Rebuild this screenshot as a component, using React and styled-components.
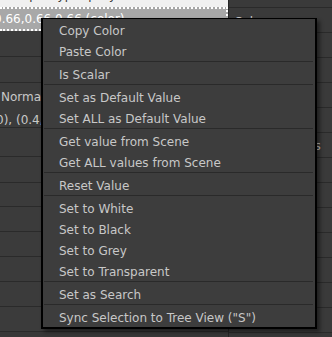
import React from 'react';
import styled, { createGlobalStyle } from 'styled-components';

const Global = createGlobalStyle`
  html, body { margin: 0; padding: 0; background: #3a3a3a; }
  body {
    font-family: "DejaVu Sans", Verdana, sans-serif;
    font-size: 12px;
    overflow: hidden;
  }
`;

const Page = styled.div`
  position: relative;
  width: 332px;
  height: 337px;
  overflow: hidden;
  display: grid;
  grid-template-columns: 228px 1px 1fr;
  background: #3a3a3a;
`;

const Column = styled.div`
  display: flex;
  flex-direction: column;
  min-width: 0;
`;

const VDivider = styled.div`
  background: #262626;
`;

const Cell = styled.div`
  flex: none;
  height: ${(p) => p.$h}px;
  box-sizing: border-box;
  border-bottom: ${(p) => (p.$noLine ? 'none' : '1px solid #2a2a2a')};
  background: ${(p) => p.$bg || '#3b3b3b'};
  display: flex;
  flex-direction: column;
  justify-content: ${(p) => (p.$top ? 'flex-start' : 'center')};
  padding-left: ${(p) => p.$pad ?? 2}px;
  padding-top: ${(p) => p.$padTop ?? 0}px;
  color: #c8c8c8;
  white-space: nowrap;
  overflow: hidden;
`;

const HeaderStrip = styled.div`
  flex: none;
  height: 7px;
  background: #f0f0f0;
  overflow: hidden;
  color: #333;
  white-space: nowrap;
`;

const HeaderText = styled.div`
  margin-top: -12px;
  padding-left: 18px;
  line-height: 14px;
`;

const SelectedCell = styled.div`
  flex: none;
  height: 24px;
  box-sizing: border-box;
  background: #a8a8a8;
  border-top: 2px dotted #ffffff;
  border-bottom: 2px dotted #ffffff;
  border-right: 2px dotted #ffffff;
  color: #ffffff;
  display: flex;
  align-items: center;
  white-space: nowrap;
  overflow: hidden;
`;

const Shifted = styled.span`
  display: block;
  margin-left: ${(p) => p.$shift}px;
  line-height: ${(p) => p.$lh || 14}px;
`;

const Menu = styled.div`
  position: absolute;
  left: 41px;
  top: 18px;
  width: 276px;
  box-sizing: border-box;
  background: #3d3d3d;
  border-style: solid;
  border-color: #000;
  border-width: 1px 2px 2px 2px;
  box-shadow: 3px 3px 4px rgba(0, 0, 0, 0.45);
  display: flex;
  flex-direction: column;
`;

const MenuItem = styled.div`
  height: 21px;
  box-sizing: border-box;
  padding: 4px 0 0 16px;
  line-height: 17px;
  color: #c8c8c8;
  white-space: nowrap;
`;

const Separator = styled.div`
  height: 2px;
  margin: 0 2px 0 1px;
  border-top: 1px solid #2a2a2a;
  box-sizing: border-box;
`;

const groups = [
  ['Copy Color', 'Paste Color'],
  ['Is Scalar'],
  ['Set as Default Value', 'Set ALL as Default Value'],
  ['Get value from Scene', 'Get ALL values from Scene'],
  ['Reset Value'],
  ['Set to White', 'Set to Black', 'Set to Grey', 'Set to Transparent'],
  ['Set as Search'],
  ['Sync Selection to Tree View ("S")'],
];

const leftRows = [
  { h: 26 },
  { h: 26 },
  { h: 45, two: true },
  { h: 29 },
  { h: 26 },
  { h: 24 },
  { h: 25 },
  { h: 25 },
  { h: 25 },
  { h: 25 },
  { h: 25 },
  { h: 10, bg: '#383838', noLine: true },
];

const rightRows = [
  { h: 8, text: '' },
  { h: 25, text: 'Color', padTop: 3 },
  { h: 25 },
  { h: 25 },
  { h: 25 },
  { h: 25 },
  { h: 25, text: 'Default Values', padTop: 2 },
  { h: 25 },
  { h: 25 },
  { h: 25 },
  { h: 25 },
  { h: 25 },
  { h: 25 },
  { h: 25 },
  { h: 10, bg: '#383838', noLine: true },
];

export default function App() {
  return (
    <>
      <Global />
      <Page>
        <Column>
          <HeaderStrip>
            <HeaderText>Input type (p) (y)</HeaderText>
          </HeaderStrip>
          <SelectedCell>
            <Shifted $shift={-6}>0.66,0.66,0.66 (color)</Shifted>
          </SelectedCell>
          {leftRows.map((r, i) =>
            r.two ? (
              <Cell key={i} $h={r.h} $top $padTop={3} $pad={0}>
                <Shifted $shift={1} $lh={23}>Normal</Shifted>
                <Shifted $shift={-4} $lh={23}>0), (0.4,0.4,0.4)</Shifted>
              </Cell>
            ) : (
              <Cell key={i} $h={r.h} $bg={r.bg} $noLine={r.noLine} />
            )
          )}
        </Column>
        <VDivider />
        <Column>
          {rightRows.map((r, i) => (
            <Cell
              key={i}
              $h={r.h}
              $bg={r.bg || '#3a3a3a'}
              $noLine={r.noLine}
              $pad={5}
              $padTop={r.padTop || 0}
            >
              {r.text}
            </Cell>
          ))}
        </Column>
        <Menu>
          {groups.map((g, gi) => (
            <React.Fragment key={gi}>
              {gi > 0 && <Separator />}
              {g.map((label) => (
                <MenuItem key={label}>{label}</MenuItem>
              ))}
            </React.Fragment>
          ))}
        </Menu>
      </Page>
    </>
  );
}
